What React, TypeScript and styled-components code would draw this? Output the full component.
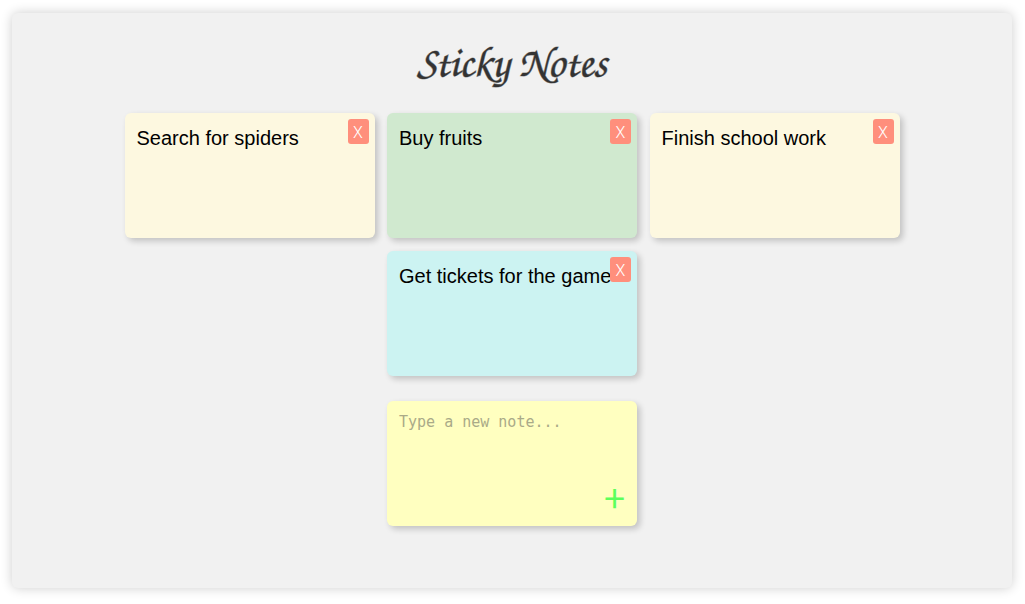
import React, { useState } from 'react';
import styled, { createGlobalStyle } from 'styled-components';

const GlobalStyle = createGlobalStyle`
  * { box-sizing: border-box; }
  body {
    margin: 0;
    background: #fff;
    font-family: "Liberation Sans", Arial, sans-serif;
  }
`;

const Board = styled.main`
  display: flex;
  flex-direction: column;
  align-items: center;
  min-height: calc(100vh - 29px);
  margin: 13px 13px 16px 12px;
  padding: 22px 12px;
  border-radius: 6px;
  background: #f1f1f1;
  box-shadow: 0 0 12px rgba(0, 0, 0, 0.2);
`;

const Title = styled.h1`
  margin: 0 0 28px;
  color: #333;
  font-family: "TeX Gyre Chorus", Z003, "Apple Chancery", cursive;
  font-size: 43px;
  font-weight: 700;
  line-height: 50px;
  -webkit-text-stroke: 1px rgba(51, 51, 51, 0.5);
`;

const NoteGrid = styled.ul`
  display: grid;
  grid-template-columns: repeat(3, 250px);
  justify-content: space-between;
  row-gap: 13px;
  width: 100%;
  max-width: 775px;
  margin: 0 0 25px;
  padding: 0;
  list-style: none;
`;

const NoteCard = styled.li<{ $color: string }>`
  position: relative;
  height: 125px;
  padding: 12px;
  border-radius: 6px;
  background: ${({ $color }) => $color};
  box-shadow: 3px 3px 6px rgba(0, 0, 0, 0.2);
  font-size: 20px;
  line-height: 26px;

  &:last-child:nth-child(3n + 1) {
    grid-column: 2;
  }
`;

const DeleteButton = styled.button`
  position: absolute;
  top: 6px;
  right: 6px;
  height: 25px;
  width: 21px;
  padding: 2px 0 0;
  border: 0;
  border-radius: 3px;
  background: #ff8f7c;
  color: #fff;
  font-family: Roboto, sans-serif;
  font-size: 16px;
  font-weight: 300;
  cursor: pointer;
`;

const Composer = styled.form`
  position: relative;
  width: 250px;
  height: 125px;
  border-radius: 6px;
  background: #ffffc0;
  box-shadow: 3px 3px 6px rgba(0, 0, 0, 0.2);
`;

const NoteInput = styled.textarea`
  display: block;
  width: 100%;
  height: 100%;
  padding: 12px;
  border: 0;
  outline: 0;
  resize: none;
  background: transparent;
  font-family: "DejaVu Sans Mono", monospace;
  font-size: 15px;
  line-height: 18px;

  &::placeholder {
    color: #aaaa88;
    opacity: 1;
  }
`;

const AddButton = styled.button`
  position: absolute;
  right: 12px;
  bottom: 9px;
  padding: 0;
  border: 0;
  background: transparent;
  color: #5cff5c;
  font-family: "Noto Sans CJK SC", sans-serif;
  font-size: 38px;
  font-weight: 400;
  line-height: 40px;
  cursor: pointer;
`;

const palette = ['#fdf8e0', '#d0e9cf', '#fdf8e0', '#ccf3f2'];

export default function App() {
  const [notes, setNotes] = useState([
    'Search for spiders',
    'Buy fruits',
    'Finish school work',
    'Get tickets for the game',
  ].map((text, id) => ({ id, text, color: palette[id] })));
  const [draft, setDraft] = useState('');

  const addNote = (event: React.FormEvent) => {
    event.preventDefault();
    const text = draft.trim();
    if (!text) return;
    setNotes([...notes, { id: Date.now(), text, color: palette[notes.length % palette.length] }]);
    setDraft('');
  };

  return (
    <>
      <GlobalStyle />
      <Board>
        <Title>Sticky Notes</Title>
        <NoteGrid>
          {notes.map((note) => (
            <NoteCard key={note.id} $color={note.color}>
              {note.text}
              <DeleteButton
                type="button"
                onClick={() => setNotes(notes.filter((n) => n.id !== note.id))}
              >
                X
              </DeleteButton>
            </NoteCard>
          ))}
        </NoteGrid>
        <Composer onSubmit={addNote}>
          <NoteInput
            aria-label="New note"
            placeholder="Type a new note..."
            value={draft}
            onChange={(event) => setDraft(event.target.value)}
          />
          <AddButton type="submit">+</AddButton>
        </Composer>
      </Board>
    </>
  );
}
